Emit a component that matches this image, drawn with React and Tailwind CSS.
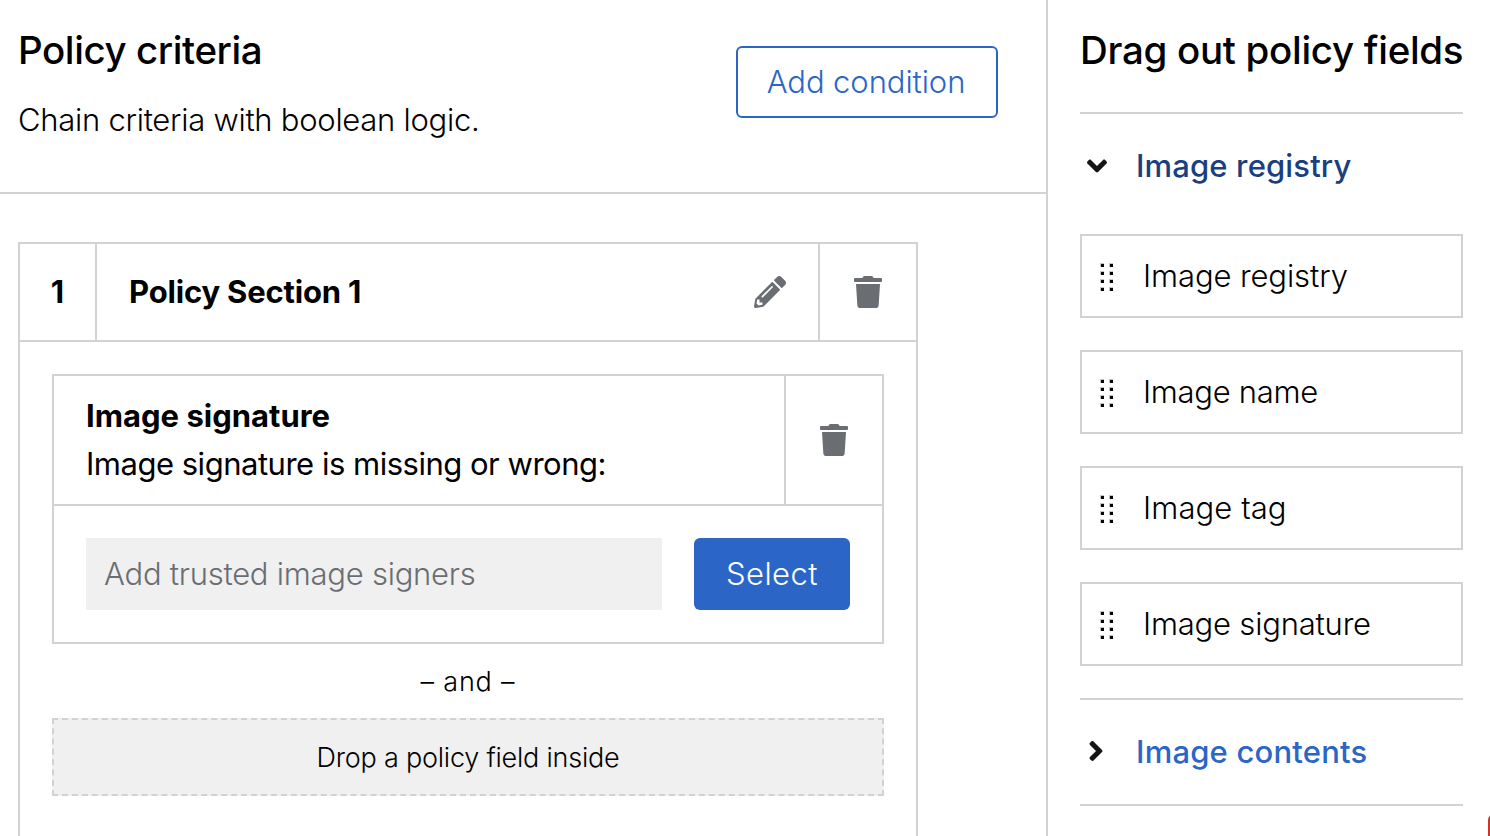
import { FaAngleDown, FaAngleRight, FaPencilAlt, FaTrash } from "react-icons/fa";

const registryFields = [
  { label: "Image registry", tracking: "tracking-[-0.1px]" },
  { label: "Image name", tracking: "tracking-[-0.3px]" },
  { label: "Image tag", tracking: "tracking-[0.1px]" },
  { label: "Image signature", tracking: "tracking-[-0.2px]" },
];

function GripIcon() {
  return (
    <svg width="14" height="28" viewBox="0 0 14 28" className="mt-[2px] shrink-0" shapeRendering="crispEdges">
      {[0, 8, 16, 24].map((y) => (
        <g key={y}>
          <rect x="0" y={y} width="4" height="4" fill="#c4c4c4" />
          <rect x="9" y={y} width="4" height="4" fill="#c4c4c4" />
          <rect x="1" y={y + 1} width="3" height="3" fill="#000" />
          <rect x="10" y={y + 1} width="3" height="3" fill="#000" />
        </g>
      ))}
    </svg>
  );
}

function FieldCard() {
  return (
    <div className="h-[270px] border-2 border-[#d2d2d2]">
      <div className="flex h-[130px] border-b-2 border-[#d2d2d2]">
        <div className="flex-1 pl-8 pt-4 text-[31px] leading-[48px]">
          <div className="font-[680]">Image signature</div>
          <div className="font-[430] tracking-[-0.49px]">Image signature is missing or wrong:</div>
        </div>
        <button className="flex w-[98px] items-center justify-center border-l-2 border-[#d2d2d2]">
          <FaTrash className="size-8 text-[#6a6e73]" />
        </button>
      </div>
      <div className="flex gap-8 p-8">
        <div className="flex h-[72px] flex-1 items-center bg-[#f0f0f0] pl-[18px] text-[31px] font-[320] tracking-[-0.25px] text-[#6a6e73]">
          Add trusted image signers
        </div>
        <button className="h-[72px] w-[156px] rounded-[6px] bg-[#2b66c7] text-[31px] font-[320] tracking-[0.45px] text-white">
          Select
        </button>
      </div>
    </div>
  );
}

function PolicySection() {
  return (
    <section className="h-[640px] w-[900px] shrink-0 border-2 border-[#d2d2d2]">
      <header className="flex h-[98px] border-b-2 border-[#d2d2d2] text-[31px] font-[680]">
        <div className="flex w-[77px] items-center justify-center border-r-2 border-[#d2d2d2]">1</div>
        <h2 className="flex flex-1 items-center pl-8 tracking-[-0.18px]">Policy Section 1</h2>
        <button className="mr-8 text-[#6a6e73]">
          <FaPencilAlt className="size-8" />
        </button>
        <button className="flex w-[98px] items-center justify-center border-l-2 border-[#d2d2d2]">
          <FaTrash className="size-8 text-[#6a6e73]" />
        </button>
      </header>
      <div className="flex flex-col px-8 pt-8">
        <FieldCard />
        <div className="flex h-[74px] items-center justify-center pt-[2px] text-[27px] font-[350] tracking-[0.8px]">
          – and –
        </div>
        <div className="flex h-[78px] items-center justify-center border-2 border-dashed border-[#d2d2d2] bg-[#f0f0f0] pt-[2px] text-[27px] font-[350] tracking-[-0.22px]">
          Drop a policy field inside
        </div>
      </div>
    </section>
  );
}

function FieldsPanel() {
  return (
    <aside className="w-[415px] shrink-0 pl-8">
      <h1 className="flex h-[112px] items-center pb-[10px] text-[38.5px] font-[450] tracking-[-0.3px] whitespace-nowrap">
        Drag out policy fields
      </h1>
      <div className="border-t-2 border-[#d2d2d2]">
        <button className="flex h-[104px] w-full items-center">
          <FaAngleDown className="ml-[1px] size-8 text-[#151515]" />
          <span className="ml-[23px] text-[31px] font-[540] tracking-[0.14px] text-[#1a3f80]">Image registry</span>
        </button>
        <ul className="flex flex-col gap-8 pt-4 pb-8">
          {registryFields.map((f) => (
            <li key={f.label} className="flex h-[84px] items-center border-2 border-[#d2d2d2] pl-[18px]">
              <GripIcon />
              <span className={`ml-[29px] text-[31px] font-[330] ${f.tracking}`}>{f.label}</span>
            </li>
          ))}
        </ul>
      </div>
      <div className="border-y-2 border-[#d2d2d2]">
        <button className="flex h-[104px] w-full items-center">
          <FaAngleRight className="mb-[2px] size-8 text-[#151515]" />
          <span className="ml-[24px] text-[31px] font-[540] tracking-[0.2px] text-[#2b66c7]">Image contents</span>
        </button>
      </div>
    </aside>
  );
}

export default function App() {
  return (
    <div className="relative flex h-[836px] w-[1490px] overflow-hidden bg-white font-['Inter',sans-serif] text-black">
      <main className="flex w-[1048px] shrink-0 flex-col border-r-2 border-[#d2d2d2]">
        <header className="flex h-[194px] shrink-0 justify-between border-b-2 border-[#d2d2d2] pl-[18px] pr-12">
          <div className="pt-[26px]">
            <h1 className="text-[38.5px] leading-[48px] font-[450] tracking-[-0.42px]">Policy criteria</h1>
            <p className="mt-[22px] text-[31px] leading-[48px] font-[330] tracking-[-0.27px]">
              Chain criteria with boolean logic.
            </p>
          </div>
          <button className="mt-[46px] h-[72px] w-[262px] rounded-[6px] border-2 border-[#2b66c7] pr-[2px] text-[31px] font-[320] tracking-[-0.08px] text-[#2b66c7]">
            Add condition
          </button>
        </header>
        <div className="pt-12 pl-[18px]">
          <PolicySection />
        </div>
      </main>
      <FieldsPanel />
      <div className="absolute top-[814px] left-[1488px] h-16 w-16 rounded-[6px] bg-[#c9372c]" />
    </div>
  );
}
